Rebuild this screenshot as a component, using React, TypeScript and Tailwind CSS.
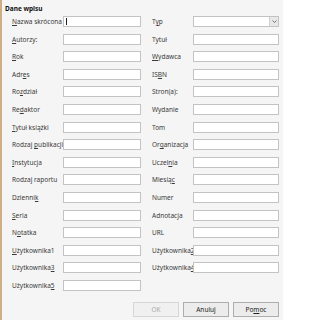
import React from "react";

type L = { t: string; u?: number };

const left: L[] = [
  { t: "Nazwa skrócona", u: 0 },
  { t: "Autorzy:", u: 0 },
  { t: "Rok", u: 0 },
  { t: "Adres", u: 3 },
  { t: "Rozdział", u: 2 },
  { t: "Redaktor", u: 2 },
  { t: "Tytuł książki", u: 0 },
  { t: "Rodzaj publikacji", u: 7 },
  { t: "Instytucja", u: 0 },
  { t: "Rodzaj raportu" },
  { t: "Dziennik", u: 7 },
  { t: "Seria", u: 0 },
  { t: "Notatka", u: 1 },
  { t: "Użytkownika1", u: 0 },
  { t: "Użytkownika3", u: 11 },
  { t: "Użytkownika5", u: 11 },
];

const right: L[] = [
  { t: "Typ", u: 1 },
  { t: "Tytuł" },
  { t: "Wydawca", u: 0 },
  { t: "ISBN", u: 2 },
  { t: "Stron(a):" },
  { t: "Wydanie" },
  { t: "Tom" },
  { t: "Organizacja", u: 2 },
  { t: "Uczelnia", u: 5 },
  { t: "Miesiąc", u: 6 },
  { t: "Numer" },
  { t: "Adnotacja" },
  { t: "URL" },
  { t: "Użytkownika2", u: 11 },
  { t: "Użytkownika4", u: 11 },
];

function Label({ l, w }: { l: L; w: string }) {
  const chars = Array.from(l.t);
  return (
    <div className={`${w} shrink-0 whitespace-nowrap leading-[11px]`}>
      {l.u === undefined
        ? l.t
        : chars.map((c, i) =>
            i === l.u ? (
              <span key={i} className="underline underline-offset-[1px] decoration-[0.5px]">
                {c}
              </span>
            ) : (
              <span key={i}>{c}</span>
            )
          )}
    </div>
  );
}

function Box({ w, cursor }: { w: string; cursor?: boolean }) {
  return (
    <div className={`${w} h-[11px] shrink-0 bg-white border border-[#c3c3c3] flex items-center`}>
      {cursor && <div className="ml-[2px] w-px h-[7px] bg-[#222]" />}
    </div>
  );
}

function Combo() {
  return (
    <div className="w-[86px] h-[11px] shrink-0 bg-white border border-[#c3c3c3] flex justify-end items-stretch">
      <div className="w-[9px] bg-[#e8e8e8] border-l border-[#d0d0d0] flex items-center justify-center">
        <svg width="5" height="3" viewBox="0 0 5 3">
          <path d="M0.5 0.5 L2.5 2.5 L4.5 0.5" fill="none" stroke="#555" strokeWidth="0.8" />
        </svg>
      </div>
    </div>
  );
}

export default function App() {
  return (
    <div
      className="w-[283px] h-[320px] bg-[#f5f5f5] flex text-[6.5px] text-[#3a3a3a] overflow-hidden"
      style={{ fontFamily: '"Noto Sans", "Open Sans", sans-serif' }}
    >
      <div className="w-[2px] shrink-0 bg-[#cfae85]" />
      <div className="flex-1 flex flex-col">
        <div className="pl-[3px] pt-[3px] h-[14px] leading-[11px] font-bold text-[#111]">Dane wpisu</div>
        <div className="mt-[2px] flex flex-col gap-[6.6px]">
          {left.map((l, i) => (
            <div key={i} className="flex items-center h-[11px]">
              <div className="w-[10px] shrink-0" />
              <Label l={l} w="w-[51px]" />
              <Box w="w-[78px]" cursor={i === 0} />
              <div className="w-[11px] shrink-0" />
              {right[i] && (
                <>
                  <Label l={right[i]} w="w-[41px]" />
                  {i === 0 ? <Combo /> : <Box w="w-[86px]" />}
                </>
              )}
            </div>
          ))}
        </div>
        <div className="mt-[11px] flex justify-end gap-[4px] pr-[4px]">
          <div className="w-[46px] h-[15px] border border-[#d6d6d6] bg-[#f0f0f0] text-[#a8a8a8] flex items-center justify-center">
            OK
          </div>
          <div className="w-[46px] h-[15px] border border-[#adadad] bg-[#ececec] text-[#222] flex items-center justify-center">
            Anuluj
          </div>
          <div className="w-[46px] h-[15px] border border-[#adadad] bg-[#ececec] text-[#222] flex items-center justify-center">
            Po<span className="underline underline-offset-[1px] decoration-[0.5px]">m</span>oc
          </div>
        </div>
      </div>
    </div>
  );
}
